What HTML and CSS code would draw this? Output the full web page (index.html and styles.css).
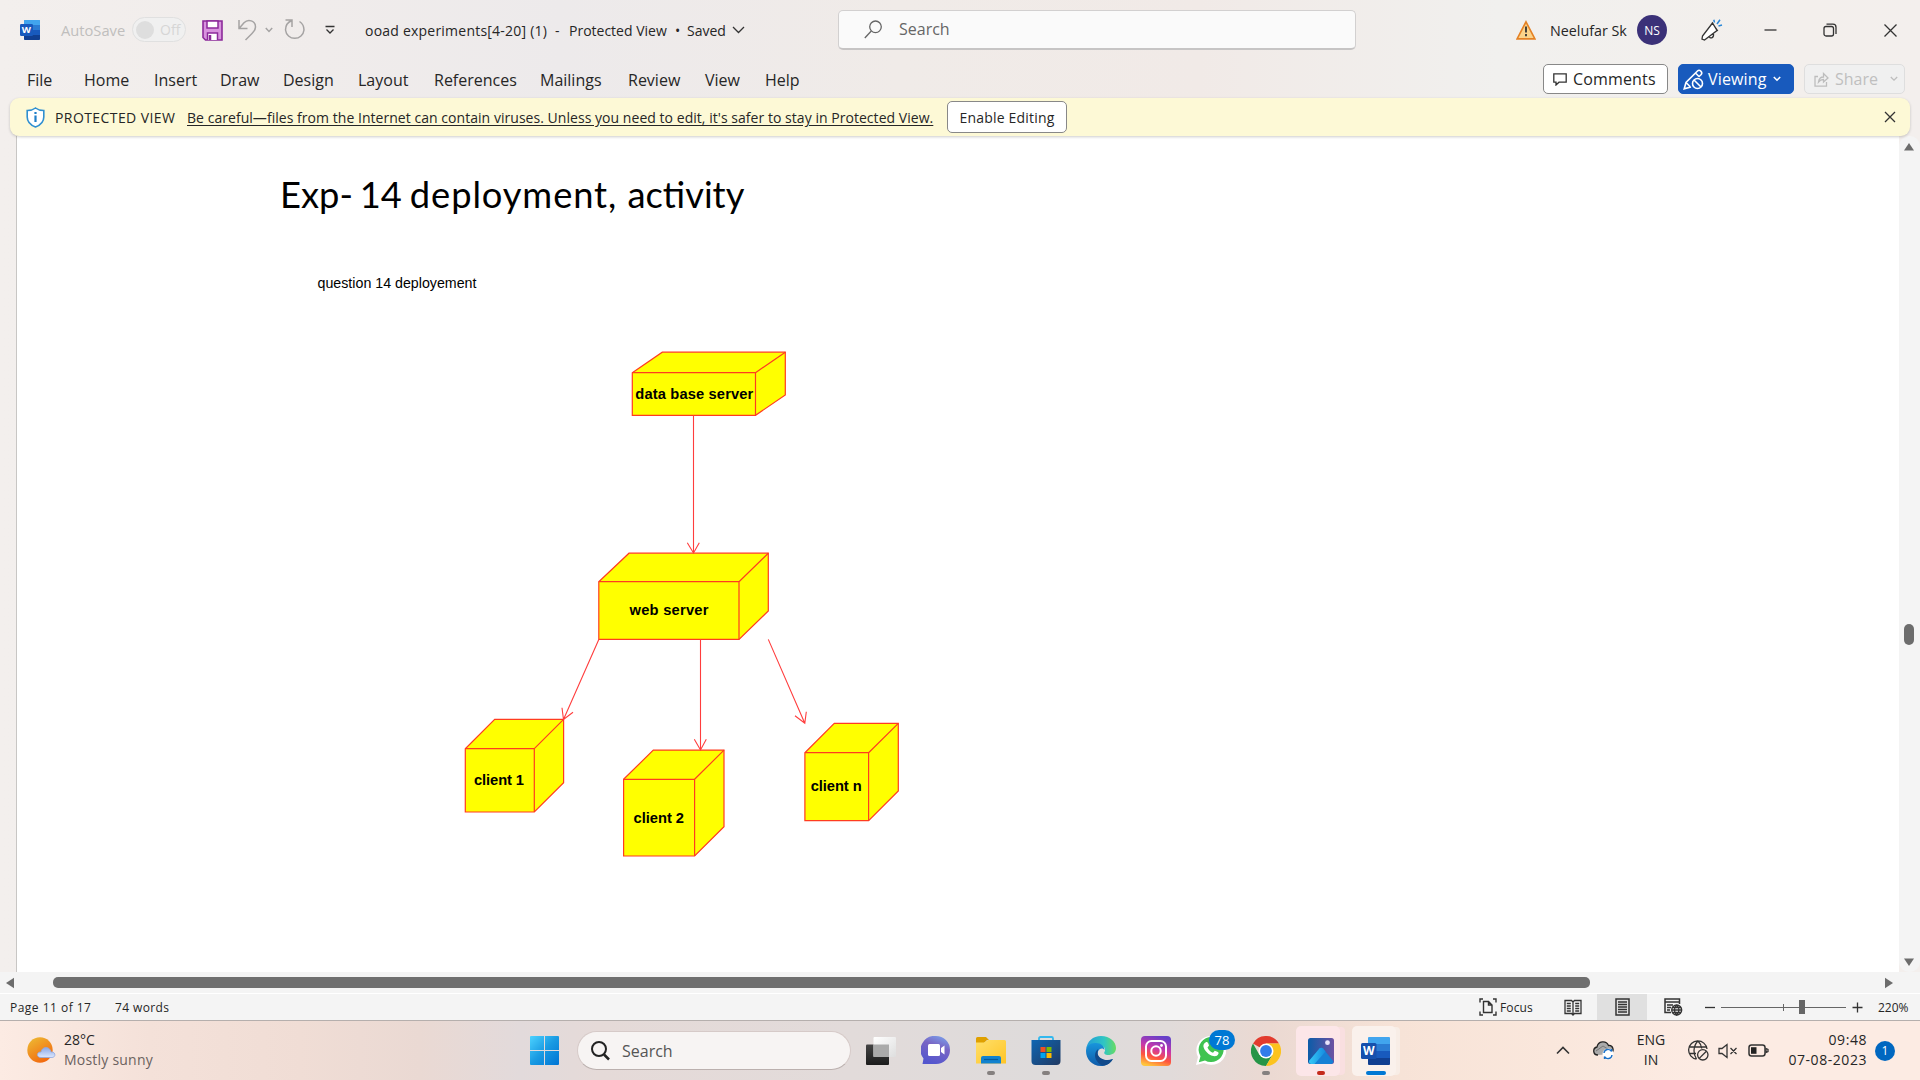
FILE: index.html
```html
<!DOCTYPE html>
<html lang="en">
<head>
<meta charset="utf-8">
<title>ooad experiments[4-20] (1) - Word</title>
<link rel="stylesheet" href="styles.css">
</head>
<body>
<div class="window">
  <header class="titlebar">
    <svg class="icon" width="20" height="20" viewBox="0 0 20 20"><rect x="4" width="16" height="20" rx="1.2" fill="#2b7cd3"/><path d="M4 1.2A1.2 1.2 0 0 1 5.200 0H18.800A1.200 1.200 0 0 1 20 1.200V5H4z" fill="#41a5ee"/><path d="M4 10h16v5H4z" fill="#185abd"/><path d="M4 15h16v3.800a1.200 1.200 0 0 1-1.200 1.200H5.200A1.200 1.200 0 0 1 4 18.800z" fill="#103f91"/><rect y="4" width="13" height="12" rx="1.200" fill="#185abd"/><text x="6.400" y="13.400" class="wglyph" font-size="9.500">W</text></svg>
    <span class="autosave">AutoSave</span>
    <span class="toggle"><i></i><span>Off</span></span>
    <svg class="icon" width="21" height="21" viewBox="0 0 21 21"><path d="M1 1h19v19H3.500L1 17.500z" fill="#d893de" stroke="#8c2a9a" stroke-width="1.600"/><path d="M5 1h11v7H5z" fill="#fff" stroke="#8c2a9a" stroke-width="1.500"/><path d="M5.500 20v-7h10v7" fill="#fff" stroke="#8c2a9a" stroke-width="1.500"/><path d="M8 15v5" stroke="#8c2a9a" stroke-width="2.500"/></svg>
    <svg class="icon line gray" width="20" height="22" viewBox="0 0 20 22"><path d="M1 1v8.500h8.500M1.500 9L6 3.800C10-.5 17.500 1.500 17.500 8c0 3-1.500 4.500-3.500 6.500L7.500 21"/></svg>
    <svg class="icon line gray" width="8" height="6" viewBox="0 0 8 6"><path d="M.8 1L4 4.500 7.200 1"/></svg>
    <svg class="icon line gray" width="22" height="22" viewBox="0 0 22 22"><path d="M1.500 1H8v7M8 1.500C4 3 1.500 6.500 1.500 11A9.300 9.300 0 0 0 20 11c0-3.500-1.500-6.500-4.500-8.500"/></svg>
    <svg class="icon line" width="10" height="10" viewBox="0 0 10 10"><path d="M.5 1.500h9M1.500 4.500L5 8l3.500-3.500"/></svg>
    <span class="t-name">ooad experiments[4-20] (1)</span>
    <span>-</span>
    <span class="t-pv">Protected View</span>
    <span>•</span>
    <span class="t-saved">Saved</span>
    <svg class="icon line" width="13" height="8" viewBox="0 0 13 8"><path d="M1 1l5.500 5.500L12 1"/></svg>
    <div class="search"><svg class="line" width="19" height="19" viewBox="0 0 19 19"><circle cx="11.500" cy="6.800" r="5.800"/><path d="M7.300 11L.8 18"/></svg><span>Search</span></div>
    <svg class="icon" width="20" height="20" viewBox="0 0 20 20"><path d="M10 1.800L18.900 18.900H1.100z" fill="#fbd38a" stroke="#e58124" stroke-width="1.600"/><path d="M10 6.500v6M10 14v2.200" stroke="#333" stroke-width="1.800"/></svg>
    <span class="user">Neelufar Sk</span>
    <span class="avatar">NS</span>
    <svg class="icon line" width="22" height="22" viewBox="0 0 22 22"><path d="M11.500 4L1.500 17l-.5 3 2.500 1L16 11.500zM8 17c.5 3 5 2.500 4.500-2M11 3.500l5.800 8.500" fill="#fff" stroke-width="1.300"/><path d="M13.500 3.500L12.800.8M16 5l3-4.300M17.500 7l3.500-1" stroke="#2b88d8" stroke-width="1.500"/></svg>
    <svg class="icon line" width="13" height="3" viewBox="0 0 13 3"><path d="M.5 1h12"/></svg>
    <svg class="icon line" width="14" height="14" viewBox="0 0 14 14"><rect x="1" y="3.500" width="9.500" height="9.500" rx="2"/><path d="M3.500 1.200H10a3 3 0 0 1 3 3V11"/></svg>
    <svg class="icon line" width="13" height="13" viewBox="0 0 13 13"><path d="M.5.5l12 12M12.500.5l-12 12"/></svg>
  </header>

  <nav class="ribbon">
    <span>File</span><span>Home</span><span>Insert</span><span>Draw</span><span>Design</span><span>Layout</span><span>References</span><span>Mailings</span><span>Review</span><span>View</span><span>Help</span>
    <div class="btn comments"><svg class="line" width="14" height="13" viewBox="0 0 14 13"><path d="M.8.8h12.400v8.400H6L3 12V9.200H.8z"/></svg><span>Comments</span></div>
    <div class="btn viewing"><svg class="line" width="21" height="21" viewBox="0 0 21 21"><path d="M8 18l-6.800 1.800L3 13.500 14.500 2c2-2 5.500 1 3.700 3.500L15.500 8M3 13.500l4 4M12.500 4l3 3"/><circle cx="14.500" cy="14.500" r="5"/><path d="M11 11l7 7"/></svg><span>Viewing</span><svg class="line" width="8" height="6" viewBox="0 0 8 6"><path d="M.8 1L4 4.200 7.200 1"/></svg></div>
    <div class="btn share"><svg class="line" width="15" height="15" viewBox="0 0 15 15"><path d="M4 4.500H1v9.700h11.500V10M4.500 10c.5-4 2.500-5 5-5V1.500L14 6 9.500 10V7.500c-2 0-3.500.5-5 2.500z"/></svg><span>Share</span><svg class="line" width="8" height="6" viewBox="0 0 8 6"><path d="M.8 1L4 4.200 7.200 1"/></svg></div>
  </nav>

  <div class="notice">
    <svg width="19" height="21" viewBox="0 0 19 21"><path d="M9.500 1C7 3 4 3.500 1.200 3.500V10c0 5 3 8 8.300 10 5.300-2 8.300-5 8.300-10V3.500C15 3.500 12 3 9.500 1z" fill="#fff" stroke="#2f8fd0" stroke-width="1.600"/><path d="M9.500 8.500V15M9.500 5v2" stroke="#1f7fc8" stroke-width="2.200"/></svg>
    <span class="n-title">PROTECTED VIEW</span>
    <span class="n-link">Be careful—files from the Internet can contain viruses. Unless you need to edit, it's safer to stay in Protected View.</span>
    <span class="n-btn">Enable Editing</span>
    <svg class="line" width="12" height="12" viewBox="0 0 12 12"><path d="M1 1l10 10M11 1L1 11"/></svg>
  </div>

  <main class="workspace">
    <div class="page">
      <h1>Exp- 14 <span>deployment,</span> activity</h1>
      <svg class="diagram" width="680" height="640" viewBox="300 250 680 640">
        <text x="317.500" y="288" font-size="14.600" textLength="159" lengthAdjust="spacingAndGlyphs">question 14 deployement</text>
        <g class="cube">
          <path d="M632.300 372.700L662.300 352.200H785.300V395L755.500 415.300H632.300z"/><path d="M632.300 372.700H755.500V415.300M755.500 372.700L785.300 352.200"/>
          <path d="M598.800 581.700L629 553.200H768.300V611L739 639.400H598.800z"/><path d="M598.800 581.700H739V639.400M739 581.700L768.300 553.200"/>
          <path d="M465.300 748.700L494.700 719.400H563.600V782.700L534.300 812H465.300z"/><path d="M465.300 748.700H534.300V812M534.300 748.700L563.600 719.400"/>
          <path d="M623.600 779.300L653.300 750.100H724V826.700L694.600 856H623.600z"/><path d="M623.600 779.300H694.600V856M694.600 779.300L724 750.100"/>
          <path d="M804.900 752.700L834.300 723.400H898.300V791L868.600 820.700H804.900z"/><path d="M804.900 752.700H868.600V820.700M868.600 752.700L898.300 723.400"/>
        </g>
        <path class="arrows" d="M693.500 415.500V553M687.300 542.700L693.500 553L699.300 542.700M598.800 639.500L563.500 719.500M562 707.700L563.500 719.500L573 712.300M700.500 639.500V750M694.300 739.300L700.500 750L706.300 739.300M768.300 639.400L804.800 723.300M795 715.700L804.800 723.300L806.300 711.700"/>
        <g class="labels">
          <text x="635.300" y="398.500" textLength="118">data base server</text>
          <text x="629.500" y="615" textLength="79">web server</text>
          <text x="474" y="785.300" textLength="50">client 1</text>
          <text x="633.500" y="823" textLength="50.500">client 2</text>
          <text x="810.700" y="791.300" textLength="51">client n</text>
        </g>
      </svg>
    </div>
    <div class="vscroll">
      <svg width="12" height="10" viewBox="0 0 12 10"><path d="M6 1L11 8.500H1z"/></svg>
      <i></i>
      <svg width="12" height="10" viewBox="0 0 12 10"><path d="M6 9L11 1.500H1z"/></svg>
    </div>
  </main>
  <div class="hscroll">
    <svg width="10" height="12" viewBox="0 0 10 12"><path d="M1 6L9 .700v10.600z"/></svg>
    <i></i>
    <svg width="10" height="12" viewBox="0 0 10 12"><path d="M9 6L1 .700v10.600z"/></svg>
  </div>

  <footer class="status">
    <span class="s-page">Page 11 of 17</span>
    <span class="s-words">74 words</span>
    <svg class="line" width="18" height="18" viewBox="0 0 18 18"><path d="M4 1H1v3.500M14 1h3v3.500M4 17H1v-3.500M14 17h3v-3.500M4.500 3.500h5l3.500 3.500v7.500H4.500zM9.500 3.500V7H13" stroke-width="1.400"/></svg>
    <span class="s-focus">Focus</span>
    <svg class="line" width="18" height="17" viewBox="0 0 18 17"><path d="M9 3L7.500 1.500H1v13h6.500L9 16l1.500-1.500H17v-13h-6.500zM9 3v13M2.800 4.500h4M2.800 7h4M2.800 9.500h4M2.800 12h4M11.200 4.500h4M11.200 7h4M11.200 9.500h4M11.200 12h4" stroke-width="1.300"/></svg>
    <div class="print"><svg class="line" width="15" height="18" viewBox="0 0 15 18"><path d="M1 1h13v16H1zM3 4h9M3 6.500h9M3 9h9M3 11.500h9M3 14h9" stroke-width="1.500"/></svg></div>
    <svg class="line" width="19" height="18" viewBox="0 0 19 18"><path d="M7 14.500H1V1h14.500v5M1 4h14.500M3 7h6M3 9.500h4M3 12h3" stroke-width="1.500"/><circle cx="12.700" cy="12" r="5"/><path d="M7.700 12h10M12.700 7c-3 3-3 7 0 10 3-3 3-7 0-10M8.500 9.500h8.500M8.500 14.500h8.500"/></svg>
    <svg class="line" width="10" height="3" viewBox="0 0 10 3"><path d="M0 1.500h10"/></svg>
    <svg width="126" height="16" viewBox="0 0 126 16"><path d="M0 8.500h125M62.500 5v7" stroke="#666"/><path d="M78 1h6v14h-6z" fill="#666"/></svg>
    <svg class="line" width="11" height="11" viewBox="0 0 11 11"><path d="M.5 5.500h10M5.500.5v10"/></svg>
    <span class="s-zoom">220%</span>
  </footer>

  <div class="taskbar">
    <svg width="29" height="27" viewBox="0 0 29 27"><defs><linearGradient id="sun" x1="0" y1="0" x2=".6" y2="1"><stop stop-color="#edbe35"/><stop offset="1" stop-color="#f26a10"/></linearGradient><linearGradient id="cld" x2="0" y2="1"><stop stop-color="#8ba8e8"/><stop offset="1" stop-color="#dce7fd"/></linearGradient></defs><circle cx="13" cy="13" r="12.700" fill="url(#sun)"/><path d="M14 20.500c-5 0-4.500-6 0-5.500 1-6 9-6 10 0 5-.5 5 5.500 1 5.500z" fill="url(#cld)" stroke="#91a8df" stroke-width=".8"/></svg>
    <div class="weather"><span>28°C</span><span>Mostly sunny</span></div>
    <svg width="29" height="29" viewBox="0 0 29 29"><defs><linearGradient id="win" x2="1" y2="1"><stop stop-color="#4cd2ff"/><stop offset=".5" stop-color="#199ae2"/><stop offset="1" stop-color="#0074d4"/></linearGradient></defs><path d="M1 0h13v14H0V1a1 1 0 0 1 1-1zM15 0h13a1 1 0 0 1 1 1v13H15zM0 15h14v14H1a1 1 0 0 1-1-1zM15 15h14v13a1 1 0 0 1-1 1H15z" fill="url(#win)"/></svg>
    <div class="tsearch"><svg width="19" height="20" viewBox="0 0 19 20" fill="none" stroke="#222" stroke-width="2"><circle cx="8" cy="8" r="7"/><path d="M13 13.500l5 5" stroke-width="2.500"/></svg><span>Search</span></div>
    <svg width="30" height="28" viewBox="0 0 30 28"><defs><linearGradient id="tv" x2="0" y2="1"><stop stop-color="#444"/><stop offset="1" stop-color="#1c1c1c"/></linearGradient><linearGradient id="tw" x2="1" y2="1"><stop stop-color="#fff"/><stop offset="1" stop-color="#dedede"/></linearGradient></defs><rect y="7.500" width="23" height="20.500" rx="1" fill="url(#tv)"/><rect x="7.500" width="22.500" height="20" rx="1" fill="url(#tw)"/><path d="M7.500 7.500H23V20H7.500z" fill="#aaa"/></svg>
    <svg width="30" height="29" viewBox="0 0 30 29"><defs><linearGradient id="ch" x1=".8" y1="0" x2=".4" y2="1"><stop stop-color="#7ba0ea"/><stop offset=".4" stop-color="#7864c4"/><stop offset="1" stop-color="#5356ce"/></linearGradient></defs><path d="M15 0a14 14 0 1 1 0 28H1.500l1-5.500A14 14 0 0 1 15 0z" fill="url(#ch)"/><rect x="7" y="8" width="12" height="12" rx="1.500" fill="#fff"/><path d="M20 12l3.500-2.500v9L20 16z" fill="#fff"/></svg>
    <div class="app on"><svg width="30" height="27" viewBox="0 0 30 27"><defs><linearGradient id="fo" x2="1" y2="1"><stop stop-color="#ffdf6a"/><stop offset="1" stop-color="#ffc526"/></linearGradient></defs><path d="M0 1.500A1.500 1.500 0 0 1 1.500 0H10l3 3h-2l-3 3H0z" fill="#dfa000"/><path d="M0 5.500h8L12 3h16.500A1.500 1.500 0 0 1 30 4.500V26.500H0z" fill="url(#fo)"/><path d="M5 26.500V21a2 2 0 0 1 2-2h16a2 2 0 0 1 2 2v5.500z" fill="#1282cf"/><path d="M8 22.500h14" stroke="#075a9c" stroke-width="1.200"/></svg></div>
    <div class="app on"><svg width="30" height="29" viewBox="0 0 30 29"><defs><linearGradient id="st" x2="1" y2="1"><stop stop-color="#0e66b3"/><stop offset="1" stop-color="#213a63"/></linearGradient></defs><path d="M8 5V2.500A1.500 1.500 0 0 1 9.500 1h11A1.500 1.500 0 0 1 22 2.500V5" fill="none" stroke="#33b8ee" stroke-width="1.800"/><path d="M.5 4h29v21a4 4 0 0 1-4 4h-21a4 4 0 0 1-4-4z" fill="url(#st)"/><path d="M9.500 11H14.500V16H9.500z" fill="#f15022"/><path d="M15.500 11h5v5h-5z" fill="#7fba00"/><path d="M9.500 17h5v5h-5z" fill="#00a4ef"/><path d="M15.500 17h5v5h-5z" fill="#ffb900"/></svg></div>
    <div class="app"><svg width="30" height="30" viewBox="0 0 30 30"><defs><linearGradient id="e1" x2="1"><stop stop-color="#239bd8"/><stop offset=".6" stop-color="#2fc5c4"/><stop offset="1" stop-color="#68dc62"/></linearGradient><linearGradient id="e2" x2="0" y2="1"><stop stop-color="#1895dc"/><stop offset="1" stop-color="#0f5ba9"/></linearGradient></defs><path d="M0 14C1 5 7 0 15 0c9 0 15 6 15 12 0 5-4 7-7.500 7-3.500 0-5-1.500-4-3 2-3-1-6.500-5-7C7 8 1 10 0 14z" fill="url(#e1)"/><path d="M0 15c0-5 5-8.500 10-8 5 0 8.500 3.500 8.500 7-1-2-5-2.500-6.500 1.500-2 6 5 11 15 7.500C24 27.500 20 30 15 30 6 30 0 23 0 15z" fill="url(#e2)"/><path d="M12.200 13c-4 3-4.500 9 .3 14 2 2 4 2.500 6 2.500 3-.5 6.500-3 8.500-6.500-8 3-15-1-15.500-6z" fill="#114a8b"/></svg></div>
    <div class="app"><svg width="30" height="30" viewBox="0 0 30 30"><defs><linearGradient id="ig" x1=".3" y1="1" x2=".6" y2="0"><stop stop-color="#ffc63c"/><stop offset=".3" stop-color="#ff543e"/><stop offset=".6" stop-color="#c837ab"/><stop offset="1" stop-color="#6640c9"/></linearGradient></defs><rect width="30" height="30" rx="4" fill="url(#ig)"/><rect x="5" y="5" width="20" height="20" rx="5.500" fill="none" stroke="#fff" stroke-width="2"/><circle cx="15" cy="15" r="4.700" fill="none" stroke="#fff" stroke-width="2"/><circle cx="20.500" cy="9.500" r="1.400" fill="#fff"/></svg></div>
    <div class="app wa"><svg width="30" height="31" viewBox="0 0 30 31"><path d="M0 30l2-8A15 14.500 0 1 1 8 28z" fill="#fff"/><path d="M2.800 27.200l1.700-6A12.500 12.500 0 1 1 9 25.500z" fill="#3fc351"/><path d="M9.500 7.500c1.500-1 2.500-.5 3.500 3l-1.500 2c1 2.500 3 4.300 5.500 5.300l1.800-2c3 1 4.200 1.500 3.700 3-1 2.500-3.500 3-6.500 2C11.500 19.500 6.500 13 7.500 10c.4-1.200 1-2 2-2.500z" fill="#fff"/></svg><b>78</b></div>
    <div class="app on"><svg width="30" height="30" viewBox="0 0 30 30"><path d="M15 15L2 7.500A15 15 0 0 1 28 7.500H15z" fill="#e23b2e"/><path d="M15 15L21.500 19 15 30A15 15 0 0 1 2 7.500L8.500 19z" fill="#269547"/><path d="M15 7.500h13A15 15 0 0 1 15 30l6.500-11.200z" fill="#fcc31e"/><circle cx="15" cy="15" r="7.500" fill="#fff"/><circle cx="15" cy="15" r="5.900" fill="#327cea"/></svg></div>
    <div class="app on photos"><svg width="26" height="26" viewBox="0 0 26 26"><defs><linearGradient id="ph" x2="1"><stop stop-color="#0c5ca8"/><stop offset="1" stop-color="#6d52a3"/></linearGradient><linearGradient id="pm" x2="1"><stop stop-color="#37c9f6"/><stop offset="1" stop-color="#148be0"/></linearGradient></defs><rect width="26" height="26" rx="2.500" fill="url(#ph)"/><path d="M1 23L11.500 10.500a2.500 2.500 0 0 1 3.500 0L25.500 23.500a3 3 0 0 1-2 2.500H3a3 3 0 0 1-2-3z" fill="#1780d5"/><path d="M1 23L11.500 10.500a2.500 2.500 0 0 1 3.500 0l2.500 3L6.500 26H3a3 3 0 0 1-2-3z" fill="url(#pm)"/><circle cx="19.500" cy="4.700" r="2.400" fill="#e8e5fb"/></svg></div>
    <div class="app on word"><svg width="29" height="28" viewBox="0 0 29 28"><path d="M7 1a1 1 0 0 1 1-1h20a1 1 0 0 1 1 1v6H7z" fill="#41a5ee"/><path d="M7 7h22v7H7z" fill="#2b7cd3"/><path d="M7 14h22v7H7z" fill="#185abd"/><path d="M7 21h22v6a1 1 0 0 1-1 1H8a1 1 0 0 1-1-1z" fill="#103f91"/><rect y="6" width="15.500" height="16" rx="1.500" fill="#1650ad"/><text x="7.700" y="18.200" class="wglyph" font-size="12">W</text></svg></div>
    <svg class="line" width="14" height="9" viewBox="0 0 14 9"><path d="M1 7.500L7 1.500l6 6" stroke-width="1.600"/></svg>
    <svg width="21" height="19" viewBox="0 0 21 19"><path d="M5 14C-.5 14-.5 7 4 6c1-6 9-7 11.500-1.500 5-.5 6 6 2.500 8.500" fill="#aaa" stroke="#222" stroke-width="1.300"/><path d="M3 10l7-5 8 5" stroke="#777" fill="none"/><circle cx="15" cy="13" r="5.500" fill="#fff"/><path d="M11 12a4 4 0 0 1 7.500-1.500V8M19 14a4 4 0 0 1-7.500 1.500V18" fill="none" stroke="#1a70c8" stroke-width="1.400"/></svg>
    <div class="lang"><span>ENG</span><span>IN</span></div>
    <svg class="line" width="21" height="21" viewBox="0 0 21 21"><path d="M8.500 19.200A9.200 9.200 0 1 1 19 9M1.500 7h17M1.500 13.500H8M8.500 19C5 14 5 6 10 1c2.500 2.500 3.500 5 3.700 7.500"/><circle cx="14.800" cy="14.800" r="5.200"/><path d="M11.200 18.400l7.200-7.200"/></svg>
    <svg class="line" width="20" height="16" viewBox="0 0 20 16"><path d="M1 5.500h3L9 1.500v13l-5-4H1zM12.500 5l6 6M18.500 5l-6 6"/></svg>
    <svg class="line" width="21" height="13" viewBox="0 0 21 13"><rect x="1" y="1" width="16" height="11" rx="2.500" stroke-width="1.500"/><path d="M18 4.500l2 1v2l-2 1z"/><path d="M3 3.200h5.500v6.600H3z" fill="#222" stroke="none"/></svg>
    <div class="clock"><span>09:48</span><span>07-08-2023</span></div>
    <span class="count">1</span>
  </div>
</div>
</body>
</html>
```
FILE: styles.css
```css
* { box-sizing: border-box; }
body { margin: 0; font-family: "Open Sans", "Noto Sans", sans-serif; color: #262626; overflow: hidden; }
svg { display: block; }
.line { fill: none; stroke: #333; stroke-width: 1.3; }
.gray { stroke: #a5a3a3; stroke-width: 1.5; }
.wglyph { fill: #fff; font-weight: 700; text-anchor: middle; }
.window { width: 1920px; height: 1080px; display: flex; flex-direction: column; background: linear-gradient(90deg, #f3efed 0, #f0eceb 320px, #edeaeb 560px, #f0ebe8 900px, #f1eae7 1200px, #f1f0ee 1500px, #f3efec 1800px, #f3efed 1920px); }
.titlebar { height: 60px; flex: none; display: grid; align-items: center; padding-left: 20px; white-space: nowrap; font-size: 14px;
  grid-template-columns: 41px 71px 70px 36px 27px 19px 41px 40px 190px 14px 106px 12px 45px 106px 678px 34px 87px 64px 63px 59px 61px 16px; }
.autosave { color: #c0bebd; font-size: 14.700px; }
.toggle { width: 54px; height: 25px; border: 1px solid #e0e0e0; border-radius: 13px; background: #f0f0f0; display: flex; align-items: center; padding-left: 3px; gap: 6px; color: #d6d6d6; margin-top: -1px; }
.toggle i { width: 18px; height: 18px; border-radius: 50%; background: #dedede; }
.t-name { letter-spacing: .22px; }
.search { width: 518px; height: 40px; border: 1px solid #d2d0d0; border-bottom: 2px solid #c6c4c4; border-radius: 5px; background: #fafafa; display: flex; align-items: center; padding-left: 25px; gap: 16px; font-size: 16px; color: #666; }
.search svg { stroke: #666; }
.search span { margin-top: -2px; }
.user { font-size: 14.300px; }
.avatar { width: 30px; height: 30px; border-radius: 50%; background: #3b3178; color: #fff; font-size: 12px; display: flex; align-items: center; justify-content: center; }
.ribbon { height: 38px; flex: none; display: grid; align-items: center; padding: 0 0 0 27px; font-size: 16px; white-space: nowrap;
  grid-template-columns: 57px 70px 66px 63px 75px 76px 106px 88px 77px 60px 778px 135px 126px 101px; }
.ribbon > span { margin-top: 2px; }
.btn { height: 30px; border-radius: 5px; border: 1px solid #888; display: flex; align-items: center; font-size: 16px; }
.comments { width: 125px; background: #fff; padding-left: 9px; gap: 6px; letter-spacing: .15px; }
.viewing { width: 116px; background: #185abd; border-color: #185abd; color: #fff; padding-left: 4px; gap: 4px; letter-spacing: .15px; }
.viewing .line { stroke: #fff; stroke-width: 1.600; }
.viewing svg:last-child { margin-left: 2px; }
.share { width: 101px; background: #f0f0f0; border-color: #dedede; color: #bfbfbf; padding-left: 9px; gap: 6px; }
.share .line { stroke: #bdbdbd; }
.share svg:last-child { margin-left: 6px; }
.notice { height: 38px; flex: none; margin: 0 10px; background: #fdf9d6; border-radius: 9px; display: grid; align-items: center; padding-left: 16px; font-size: 14px; white-space: nowrap; position: relative; z-index: 1; box-shadow: 0 1px 3px #0003;
  grid-template-columns: 29px 132px 760px 937px 12px; }
.n-title { letter-spacing: .42px; font-weight: 500; }
.n-link { text-decoration: underline; text-underline-offset: 2px; letter-spacing: .04px; }
.n-btn { width: 120px; height: 32px; border: 1px solid #888; border-radius: 5px; background: #fff; display: flex; align-items: center; justify-content: center; letter-spacing: .2px; }
.workspace { height: 836px; flex: none; display: flex; padding-left: 16px; }
.page { width: 1883px; background: #fff; border-left: 1px solid #c8c6c4; padding: 33px 0 0 263px; }
h1 { margin: 0; font: 400 36.300px/50px Lato, sans-serif; color: #000; white-space: nowrap; word-spacing: -2.500px; }
h1 span { letter-spacing: .9px; margin: 0 3.500px 0 1.300px; }
.diagram { margin: 31px 0 0 20px; }
.diagram text { font-family: "Liberation Sans", sans-serif; fill: #000; }
.cube path { fill: #ff0; stroke: #ff3c20; stroke-width: 1.2; }
.cube path:nth-child(even) { fill: none; }
.arrows { fill: none; stroke: #ff3d3d; stroke-width: 1.1; }
.labels { font-size: 14.700px; font-weight: 700; }
.vscroll { width: 21px; background: #f4f4f4; display: flex; flex-direction: column; align-items: center; padding: 6px 1px 5px 0; border-radius: 10px; fill: #6c6c6c; }
.vscroll i { width: 10px; height: 21px; border-radius: 5px; background: #6c6c6c; margin: 472px 0 auto; }
.hscroll { height: 22px; flex: none; background: #f4f4f4; border-bottom: 1px solid #fff; display: flex; align-items: center; padding-left: 5px; fill: #6c6c6c; }
.hscroll i { width: 1537px; height: 11px; border-radius: 5px; background: #6f6f6f; margin: 0 294px 0 38px; }
.status { height: 27px; flex: none; background: #f4f4f4; border-bottom: 1px solid #b5afad; display: grid; align-items: center; padding-left: 10px; font-size: 12px; white-space: nowrap;
  grid-template-columns: 105px 1364px 21px 64px 33px 67px 41px 16px 131px 26px 32px; }
.s-page { letter-spacing: .48px; }
.s-words { letter-spacing: .38px; }
.s-focus { letter-spacing: .15px; }
.print { width: 50px; height: 26px; background: #e0e0e0; display: flex; align-items: center; justify-content: center; }
.taskbar { height: 59px; flex: none; display: grid; align-items: center; padding-left: 27px; white-space: nowrap; background: linear-gradient(90deg, #fcebe3 0, #f4e1d9 150px, #f0ddd5 300px, #ead9d3 420px, #e2dadb 520px, #e5dad8 600px, #e2dbda 850px, #dedbdb 1050px, #e1dbda 1170px, #ebd9d2 1270px, #f7e3d7 1400px, #fae7dc 1550px, #fcebe3 1700px);
  grid-template-columns: 37px 466px 47px 289px 55px 48px 55px 55px 55px 55px 55px 52px 56px 204px 37px 40px 55px 30px 30px 41px 86px 20px; }
.weather, .lang, .clock { display: flex; flex-direction: column; font-size: 14px; line-height: 20px; margin-top: -2px; }
.weather span + span { color: #6b625e; letter-spacing: .22px; }
.lang { width: 36px; align-items: center; }
.clock { width: 78px; align-items: flex-end; letter-spacing: .55px; }
.tsearch { width: 274px; height: 39px; border-radius: 20px; background: #f7f4f3; border: 1px solid #d6cac8; border-bottom-color: #bbb0ae; display: flex; align-items: center; padding-left: 13px; gap: 12px; font-size: 16px; color: #555; }
.app { width: 44px; height: 50px; display: flex; align-items: center; justify-content: center; position: relative; border-radius: 5px; }
.on::after { content: ""; position: absolute; bottom: 1px; left: 18px; width: 8px; height: 4px; border-radius: 2px; background: #85807f; }
.photos { background: #fce6e8; box-shadow: 6px 0 0 -1px #f9dfe0; }
.photos svg { margin-left: 6px; }
.photos::after { background: #c42b1c; left: 21px; }
.word { background: #faf1ec; box-shadow: 5px 0 0 -1px #f8ede6; }
.word::after { background: #0078d4; left: 14px; width: 20px; }
.word svg { margin-left: 3px; }
.wa b { position: absolute; left: 20px; top: 4px; width: 26px; height: 20px; border-radius: 10px; background: #0078d4; color: #fff; font: 400 13px/20px "Open Sans", sans-serif; text-align: center; }
.count { width: 20px; height: 20px; border-radius: 50%; background: #0067c0; color: #fff; font-size: 12px; line-height: 20px; text-align: center; }
```
